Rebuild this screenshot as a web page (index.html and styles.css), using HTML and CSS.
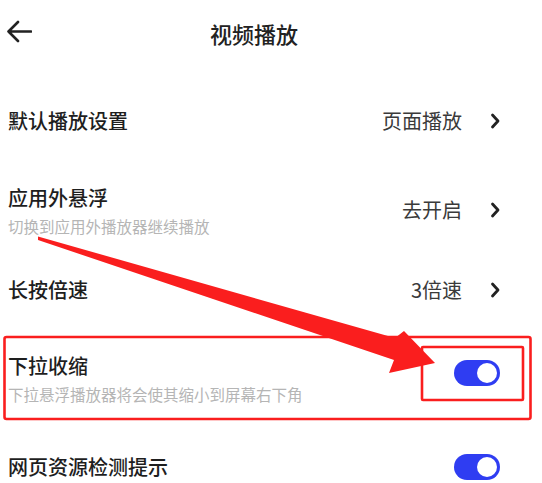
FILE: index.html
```html
<!DOCTYPE html>
<html lang="zh-CN">
<head>
<meta charset="utf-8">
<title>视频播放</title>
<link rel="stylesheet" href="styles.css">
</head>
<body>
<div class="page">
  <header class="header">
    <svg class="back" width="26" height="24" viewBox="0 0 26 24">
      <path d="M25 11.5 H2.5 M12 2 L2.5 11.5 L12 21" fill="none" stroke="#222" stroke-width="2.6" stroke-linecap="round" stroke-linejoin="round"/>
    </svg>
    <h1 class="title">视频播放</h1>
  </header>
  <main class="list">
    <div class="row row-1">
      <div class="text"><div class="name">默认播放设置</div></div>
      <div class="action"><span class="value">页面播放</span><svg class="chev" width="10" height="16" viewBox="0 0 10 16"><path d="M2.5 2 L8 8 L2.5 14" fill="none" stroke="#222" stroke-width="2.8" stroke-linecap="round" stroke-linejoin="round"/></svg></div>
    </div>
    <div class="row row-2">
      <div class="text shifted"><div class="name">应用外悬浮</div><div class="desc">切换到应用外播放器继续播放</div></div>
      <div class="action"><span class="value">去开启</span><svg class="chev" width="10" height="16" viewBox="0 0 10 16"><path d="M2.5 2 L8 8 L2.5 14" fill="none" stroke="#222" stroke-width="2.8" stroke-linecap="round" stroke-linejoin="round"/></svg></div>
    </div>
    <div class="row row-3">
      <div class="text"><div class="name">长按倍速</div></div>
      <div class="action"><span class="value">3倍速</span><svg class="chev" width="10" height="16" viewBox="0 0 10 16"><path d="M2.5 2 L8 8 L2.5 14" fill="none" stroke="#222" stroke-width="2.8" stroke-linecap="round" stroke-linejoin="round"/></svg></div>
    </div>
    <div class="row row-4">
      <div class="text"><div class="name">下拉收缩</div><div class="desc">下拉悬浮播放器将会使其缩小到屏幕右下角</div></div>
      <div class="toggle raised"><span class="knob"></span></div>
    </div>
    <div class="row row-5">
      <div class="text"><div class="name">网页资源检测提示</div></div>
      <div class="toggle"><span class="knob"></span></div>
    </div>
  </main>
  <svg class="annot" width="542" height="483" viewBox="0 0 542 483">
    <rect x="4.5" y="337" width="526" height="82" rx="2" fill="none" stroke="#fa1e1e" stroke-width="2.6"/>
    <rect x="422" y="347" width="101" height="53" rx="1" fill="none" stroke="#fa1e1e" stroke-width="2.6"/>
    <polygon points="38,236.5 395,338 404,331 435,363 389,373 394,360 38,240" fill="#fa1e1e"/>
  </svg>
</div>
</body>
</html>
```
FILE: styles.css
```css
html, body {
  margin: 0;
  padding: 0;
  background: #ffffff;
  overflow: hidden;
}
.page {
  position: relative;
  width: 542px;
  height: 483px;
  overflow: hidden;
  font-family: "Noto Sans CJK SC", "Noto Sans", sans-serif;
  color: #222;
}
.header {
  height: 66px;
  display: flex;
  align-items: center;
  padding-left: 6px;
  box-sizing: border-box;
}
.back {
  display: block;
  margin-top: -3px;
}
.title {
  margin: 0 0 0 178px;
  font-size: 22px;
  line-height: 30px;
  font-weight: 500;
  color: #222;
  letter-spacing: 0;
}
.list {
  padding-top: 15px;
}
.row {
  display: flex;
  align-items: center;
  justify-content: space-between;
  padding: 0 42px 0 8px;
  box-sizing: border-box;
}
.row-1 { height: 80px; }
.row-2 { height: 98px; }
.row-3 { height: 62px; }
.row-4 { height: 118px; }
.row-5 { height: 56px; }
.text.shifted { margin-top: 4px; }
.name {
  font-size: 20px;
  line-height: 28px;
  font-weight: 500;
  color: #1e1e1e;
}
.desc {
  font-size: 15.5px;
  line-height: 28px;
  color: #b5b5b5;
  white-space: nowrap;
}
.action {
  display: flex;
  align-items: center;
  gap: 28px;
}
.value {
  font-size: 20px;
  line-height: 28px;
  color: #3a3a3a;
}
.chev {
  display: block;
}
.toggle {
  position: relative;
  width: 46px;
  height: 26px;
  border-radius: 13px;
  background: #2f3df2;
  flex: none;
}
.toggle.raised {
  margin-bottom: 14px;
}
.knob {
  position: absolute;
  right: 3px;
  top: 3px;
  width: 20px;
  height: 20px;
  border-radius: 50%;
  background: #ffffff;
}
.annot {
  position: absolute;
  left: 0;
  top: 0;
  pointer-events: none;
}
```
